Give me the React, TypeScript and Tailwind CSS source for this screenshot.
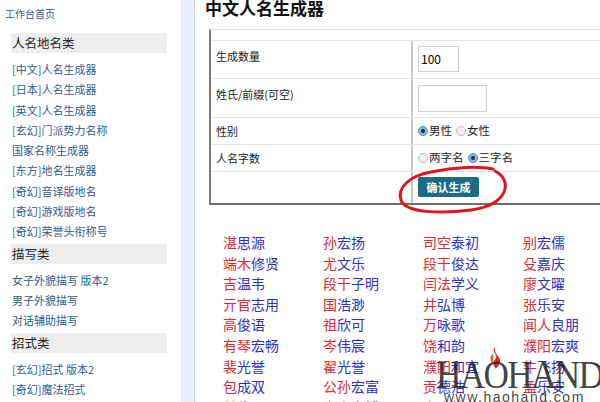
const sans = '"Noto Sans CJK SC", "Noto Sans", sans-serif';

const groups = [
  {
    title: '人名地名类',
    links: [
      '[中文]人名生成器',
      '[日本]人名生成器',
      '[英文]人名生成器',
      '[玄幻]门派势力名称',
      '国家名称生成器',
      '[东方]地名生成器',
      '[奇幻]音译版地名',
      '[奇幻]游戏版地名',
      '[奇幻]荣誉头衔称号',
    ],
  },
  { title: '描写类', links: ['女子外貌描写 版本2', '男子外貌描写', '对话辅助描写'] },
  { title: '招式类', links: ['[玄幻]招式 版本2', '[奇幻]魔法招式'] },
];

// [surname, given name]
const names: [string, string][] = [
  ['湛', '思源'], ['孙', '宏扬'], ['司空', '泰初'], ['别', '宏儒'],
  ['端木', '修贤'], ['尤', '文乐'], ['段干', '俊达'], ['殳', '嘉庆'],
  ['吉', '温韦'], ['段干', '子明'], ['闫法', '学义'], ['廖', '文曜'],
  ['亓官', '志用'], ['国', '浩渺'], ['井', '弘博'], ['张', '乐安'],
  ['高', '俊语'], ['祖', '欣可'], ['万', '咏歌'], ['闻人', '良朋'],
  ['有琴', '宏畅'], ['岑', '伟宸'], ['饶', '和韵'], ['濮阳', '宏爽'],
  ['裴', '光誉'], ['翟', '光誉'], ['濮阳', '和宜'], ['牛', '飞扬'],
  ['包', '成双'], ['公孙', '宏富'], ['贡', '德浩'], ['孟', '乐安'],
  ['单', '俊远'], ['上官', '文博'], ['宋', '嘉懿'], ['谷', '鸿运'],
];

function Radio({ checked }: { checked?: boolean }) {
  return checked ? (
    <span className="inline-flex w-[10px] h-[10px] rounded-full border border-[#5a8cc2] bg-[#86b6e6] items-center justify-center">
      <span className="w-[4px] h-[4px] rounded-full bg-[#1d2a42]" />
    </span>
  ) : (
    <span className="inline-block w-[10px] h-[10px] rounded-full border border-[#b8b8b8] bg-[#f1f1f1]" />
  );
}

function Sidebar() {
  return (
    <aside className="w-[181px] shrink-0 bg-white">
      <div className="pl-[5px] pt-[7px] text-[10px] leading-[14px] text-[#2d5b8f]">工作台首页</div>
      {groups.map((g, gi) => (
        <div key={g.title} className={gi === 0 ? 'mt-[12px]' : 'mt-[2px]'}>
          <div className="ml-[11px] w-[156px] h-[20px] bg-[#eeeeee] pl-[1px] text-[12.5px] leading-[20px] text-[#222]">
            {g.title}
          </div>
          <div className="mt-[6px] pl-[12px]">
            {g.links.map((l) => (
              <div key={l} className="h-[20.3px] text-[11px] leading-[20.3px] text-[#2d5b8f] whitespace-nowrap">
                {l}
              </div>
            ))}
          </div>
        </div>
      ))}
    </aside>
  );
}

function FormTable() {
  return (
    <div className="ml-[4px] w-[420px] border-l-2 border-b-2 border-t border-l-[#7a7a7a] border-b-[#6e6e6e] border-t-[#e4e4e4] text-[11px] text-[#222]">
      <div className="h-[11px] border-b border-[#e4e4e4]" />
      <div className="flex h-[38px] border-b border-[#e4e4e4]">
        <div className="w-[200px] pl-[5px] pt-[7px] leading-[16px]">生成数量</div>
        <div className="flex-1 border-l-2 border-[#c8c8c8] pl-[5px] pt-[5px]">
          <div className="w-[41px] h-[26px] border border-[#cfcfcf] pl-[2px] text-[12px] leading-[24px] text-black">100</div>
        </div>
      </div>
      <div className="flex h-[39px] border-b border-[#e4e4e4]">
        <div className="w-[200px] pl-[5px] pt-[7px] leading-[16px]">姓氏/前缀(可空)</div>
        <div className="flex-1 border-l-2 border-[#c8c8c8] pl-[5px] pt-[6px]">
          <div className="w-[69px] h-[27px] border border-[#cfcfcf]" />
        </div>
      </div>
      <div className="flex h-[27px] border-b border-[#e4e4e4]">
        <div className="w-[200px] pl-[5px] flex items-center">性别</div>
        <div className="flex-1 border-l-2 border-[#c8c8c8] pl-[5px] flex items-center gap-[1px] text-[11.5px]">
          <Radio checked />
          <span className="mr-[3px]">男性</span>
          <Radio />
          <span>女性</span>
        </div>
      </div>
      <div className="flex h-[27px] border-b border-[#e4e4e4]">
        <div className="w-[200px] pl-[5px] flex items-center">人名字数</div>
        <div className="flex-1 border-l-2 border-[#c8c8c8] pl-[5px] flex items-center gap-[1px] text-[11.5px]">
          <Radio />
          <span className="mr-[3px]">两字名</span>
          <Radio checked />
          <span>三字名</span>
        </div>
      </div>
      <div className="flex h-[31px]">
        <div className="w-[200px]" />
        <div className="flex-1 border-l-2 border-[#c8c8c8] pl-[5px] pt-[5px]">
          <button className="w-[61px] h-[20px] rounded-[2px] bg-[#1b6c86] text-white text-[11px] font-bold leading-[20px]">
            确认生成
          </button>
        </div>
      </div>
    </div>
  );
}

export default function App() {
  return (
    <div className="relative w-[600px] h-[402px] overflow-hidden flex bg-white" style={{ fontFamily: sans }}>
      <Sidebar />
      <div className="w-[14px] shrink-0 bg-[#e7f0fb] border-l border-r border-l-[#dde6f1] border-r-[#c9d5e4]" />
      <main className="flex-1 pl-[10px] overflow-hidden">
        <h1 className="h-[29px] -mt-[1px] text-[17px] leading-[18px] font-bold text-[#111] whitespace-nowrap">中文人名生成器</h1>
        <div className="mt-[1px]">
          <FormTable />
        </div>
        <div className="ml-[18px] mt-[27px] grid grid-cols-[100px_100px_100px_100px] text-[14px] leading-[20.6px] whitespace-nowrap">
          {names.map(([s, g], i) => (
            <div key={i} className="h-[20.6px]">
              <span className="text-[#dc2a2e]">{s}</span>
              <span className="text-[#2f2fc4]">{g}</span>
            </div>
          ))}
        </div>
      </main>

      {/* hand-drawn red circle around the button */}
      <svg className="absolute left-[395px] top-[158px]" width="125" height="60" viewBox="0 0 125 60" fill="none">
        <path
          d="M100 13 C118 22,114 47,76 52 C46 56,10 55,6 42 C2 30,14 18,36 14 C60 9,84 8,98 11"
          stroke="#e3151c"
          strokeWidth="3"
          strokeLinecap="round"
        />
      </svg>

      {/* watermark */}
      <div className="absolute left-[436px] top-[345px] pointer-events-none">
        <svg className="absolute left-[52px] top-[1px]" width="15" height="23" viewBox="0 0 16 24">
          <path d="M8 0 C2 7,14 9,6 16 C4 19,8 22,8 24 C12 21,15 16,11 11 C9 8,6 5,8 0 Z" fill="#d8261c" />
          <path d="M5 8 C1 12,3 17,6 20 C4 15,7 12,5 8 Z" fill="#e8542a" />
        </svg>
        <div
          className="mt-[13px] text-[41px] leading-[32px] text-[#222]/85 tracking-[-2px] origin-left scale-x-[0.86] whitespace-nowrap"
          style={{ fontFamily: '"Liberation Serif", serif' }}
        >
          HAOHAND
        </div>
        <div className="pl-[8px] text-[14px] leading-[14px] text-[#222]/85 tracking-[1.5px] whitespace-nowrap" style={{ fontFamily: '"Liberation Sans", sans-serif' }}>
          www.haohand.com
        </div>
      </div>
    </div>
  );
}
